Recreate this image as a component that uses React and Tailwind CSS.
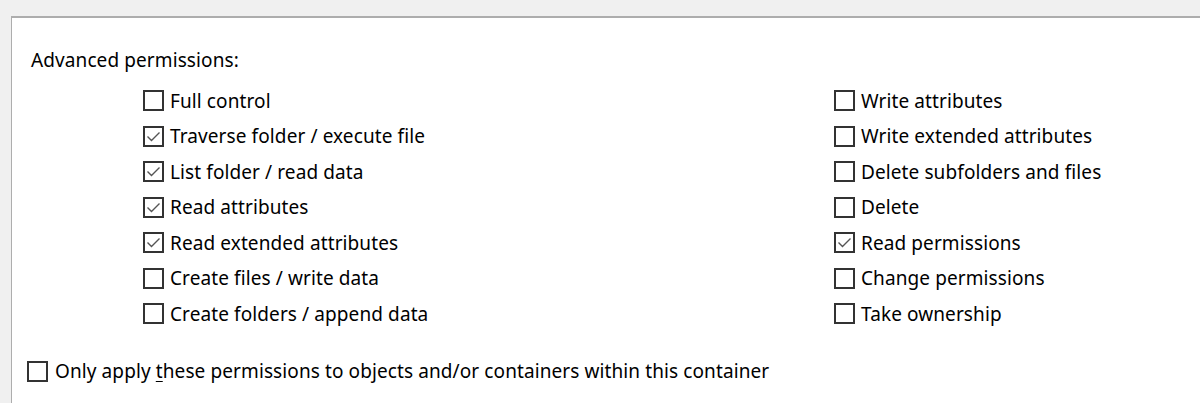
import React from 'react';

const left = [
  { label: 'Full control', checked: false },
  { label: 'Traverse folder / execute file', checked: true },
  { label: 'List folder / read data', checked: true },
  { label: 'Read attributes', checked: true },
  { label: 'Read extended attributes', checked: true },
  { label: 'Create files / write data', checked: false },
  { label: 'Create folders / append data', checked: false },
];

const right = [
  { label: 'Write attributes', checked: false },
  { label: 'Write extended attributes', checked: false },
  { label: 'Delete subfolders and files', checked: false },
  { label: 'Delete', checked: false },
  { label: 'Read permissions', checked: true },
  { label: 'Change permissions', checked: false },
  { label: 'Take ownership', checked: false },
];

const Box = ({ checked }) => (
  <div className="w-[21px] h-[21px] border-2 border-[#333333] bg-white flex items-center justify-center shrink-0">
    {checked && (
      <svg width="15" height="15" viewBox="0 0 15 15" fill="none">
        <path d="M1.5 7.5 L5.5 11.5 L13.5 3.5" stroke="#555555" strokeWidth="1.4" />
      </svg>
    )}
  </div>
);

const Row = ({ label, checked }) => (
  <div className="h-[35.5px] flex items-center gap-[6px]">
    <Box checked={checked} />
    <span>{label}</span>
  </div>
);

export default function App() {
  return (
    <div
      className="h-[403px] bg-[#f0f0f0] pt-[16px] pl-[11px] overflow-hidden text-[19px] tracking-[0.1px] text-black"
      style={{ fontFamily: '"Noto Sans", sans-serif' }}
    >
      <div className="h-full bg-white border-t-2 border-l border-[#adadad]">
        <div className="pl-[19px] pt-[30px] leading-[24px]">Advanced permissions:</div>

        <div className="flex mt-[11px] pl-[131px]">
          <div className="w-[691px]">
            {left.map((r) => (
              <Row key={r.label} {...r} />
            ))}
          </div>
          <div>
            {right.map((r) => (
              <Row key={r.label} {...r} />
            ))}
          </div>
        </div>

        <div className="pl-[15px] mt-[22px]">
          <div className="h-[35.5px] flex items-center gap-[7px]">
            <Box checked={false} />
            <span>
              Only apply <span className="underline underline-offset-[3px]">t</span>hese permissions to objects and/or containers within this container
            </span>
          </div>
        </div>
      </div>
    </div>
  );
}
